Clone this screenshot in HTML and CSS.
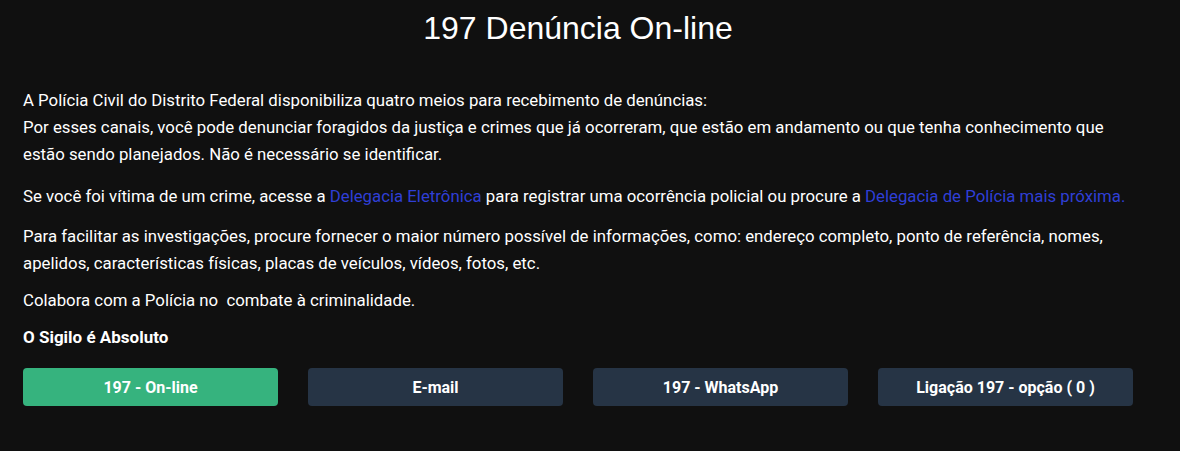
FILE: index.html
```html
<!DOCTYPE html>
<html lang="pt-BR">
<head>
<meta charset="utf-8">
<title>197 Denúncia On-line</title>
<link rel="stylesheet" href="styles.css">
</head>
<body>
<main class="container">
  <h1 class="title">197 Denúncia On-line</h1>
  <p class="text p1">A Polícia Civil do Distrito Federal disponibiliza quatro meios para recebimento de denúncias:<br>Por esses canais, você pode denunciar foragidos da justiça e crimes que já ocorreram, que estão em andamento ou que tenha conhecimento que estão sendo planejados. Não é necessário se identificar.</p>
  <p class="text p2">Se você foi vítima de um crime, acesse a <a class="link" href="#">Delegacia Eletrônica</a> para registrar uma ocorrência policial ou procure a <a class="link" href="#">Delegacia de Polícia mais próxima.</a></p>
  <p class="text p3">Para facilitar as investigações, procure fornecer o maior número possível de informações, como: endereço completo, ponto de referência, nomes, apelidos, características físicas, placas de veículos, vídeos, fotos, etc.</p>
  <p class="text p4">Colabora com a Polícia no&nbsp; combate à criminalidade.</p>
  <p class="text strong">O Sigilo é Absoluto</p>
  <div class="buttons">
    <a class="btn btn-green" href="#">197 - On-line</a>
    <a class="btn btn-dark" href="#">E-mail</a>
    <a class="btn btn-dark" href="#">197 - WhatsApp</a>
    <a class="btn btn-dark" href="#">Ligação 197 - opção ( 0 )</a>
  </div>
</main>
</body>
</html>
```

FILE: styles.css
```css
html, body {
  margin: 0;
  padding: 0;
  background: #101010;
}
body {
  font-family: Roboto, "Liberation Sans", sans-serif;
  color: #ffffff;
  font-size: 16px;
}
.container {
  width: 1110px;
  padding: 0 0 0 23px;
}
.title {
  font-family: "Liberation Sans", Arial, sans-serif;
  font-weight: normal;
  font-size: 32px;
  line-height: 36px;
  text-align: center;
  margin: 10px 0 41px;
}
.text {
  margin: 0 0 12px;
  font-size: 16.8px;
  line-height: 27px;
}
.p1 { margin-bottom: 15px; }
.p2 { margin-bottom: 13px; }
.p3 { margin-bottom: 10px; }
.p4 { margin-bottom: 10px; }
.strong {
  font-size: 17px;
  font-weight: bold;
  margin-bottom: 17px;
}
.link {
  color: #2f3fd6;
  text-decoration: none;
}
.buttons {
  display: grid;
  grid-template-columns: repeat(4, 255px);
  column-gap: 30px;
}
.btn {
  display: flex;
  align-items: center;
  justify-content: center;
  height: 38px;
  border-radius: 4px;
  color: #ffffff;
  font-weight: bold;
  text-decoration: none;
}
.btn-green {
  background: #36b37e;
}
.btn-dark {
  background: #263445;
}
```
